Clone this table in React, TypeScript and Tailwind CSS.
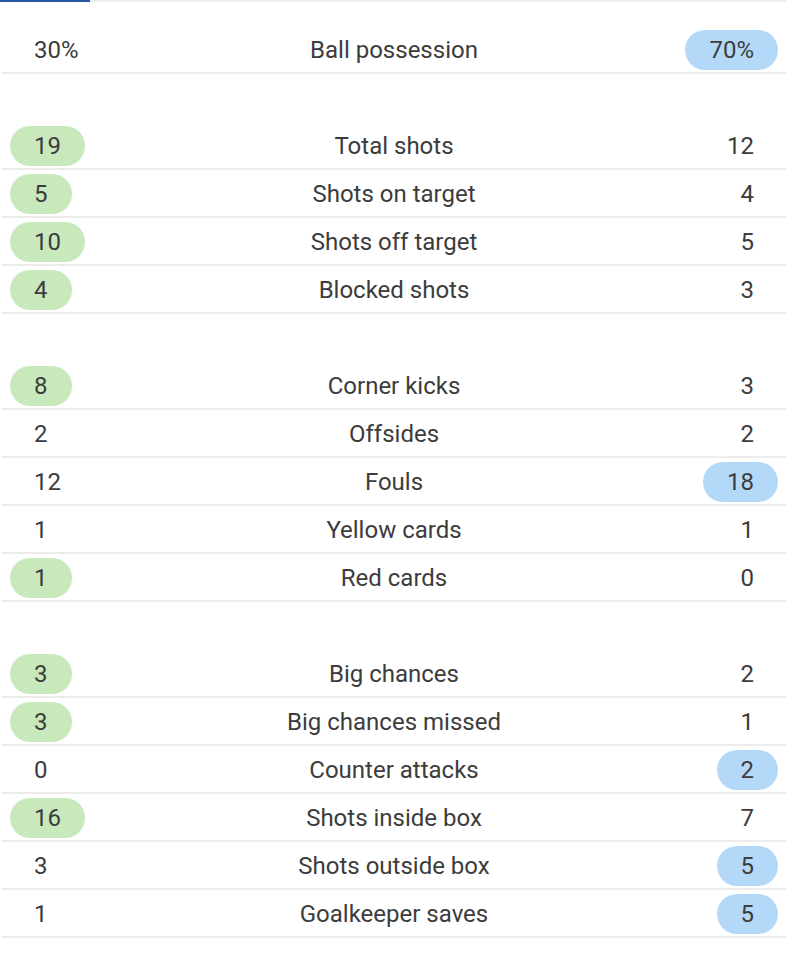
import React from "react";

type Row = { l: string; label: string; r: string; hl?: "l" | "r" };

const sections: Row[][] = [
  [{ l: "30%", label: "Ball possession", r: "70%", hl: "r" }],
  [
    { l: "19", label: "Total shots", r: "12", hl: "l" },
    { l: "5", label: "Shots on target", r: "4", hl: "l" },
    { l: "10", label: "Shots off target", r: "5", hl: "l" },
    { l: "4", label: "Blocked shots", r: "3", hl: "l" },
  ],
  [
    { l: "8", label: "Corner kicks", r: "3", hl: "l" },
    { l: "2", label: "Offsides", r: "2" },
    { l: "12", label: "Fouls", r: "18", hl: "r" },
    { l: "1", label: "Yellow cards", r: "1" },
    { l: "1", label: "Red cards", r: "0", hl: "l" },
  ],
  [
    { l: "3", label: "Big chances", r: "2", hl: "l" },
    { l: "3", label: "Big chances missed", r: "1", hl: "l" },
    { l: "0", label: "Counter attacks", r: "2", hl: "r" },
    { l: "16", label: "Shots inside box", r: "7", hl: "l" },
    { l: "3", label: "Shots outside box", r: "5", hl: "r" },
    { l: "1", label: "Goalkeeper saves", r: "5", hl: "r" },
  ],
];

function Val({ v, hl }: { v: string; hl?: "green" | "blue" }) {
  const bg = hl === "green" ? "bg-[#c9e8bc]" : hl === "blue" ? "bg-[#b4d9f8]" : "";
  return (
    <div className={`h-10 px-6 rounded-full flex items-center justify-center ${bg}`}>
      {v}
    </div>
  );
}

export default function App() {
  return (
    <div
      className="w-[790px] h-[958px] bg-white text-[#3c3c3c] text-[24px] leading-none"
      style={{ fontFamily: "Roboto, 'Noto Sans', sans-serif" }}
    >
      <div className="flex w-[786px] h-[2px]">
        <div className="w-[90px] bg-[#2358a3]" />
        <div className="flex-1 bg-[#ededf0]" />
      </div>
      <div className="mx-[2px] w-[784px] pt-6 flex flex-col gap-12">
        {sections.map((sec, i) => (
          <div key={i} className="flex flex-col">
            {sec.map((row, j) => (
              <div
                key={j}
                className="grid grid-cols-[1fr_auto_1fr] items-center pt-1 pb-[2px] px-2 border-b-2 border-[#ececec]"
              >
                <div className="flex justify-start">
                  <Val v={row.l} hl={row.hl === "l" ? "green" : undefined} />
                </div>
                <div className="text-center">{row.label}</div>
                <div className="flex justify-end">
                  <Val v={row.r} hl={row.hl === "r" ? "blue" : undefined} />
                </div>
              </div>
            ))}
          </div>
        ))}
      </div>
    </div>
  );
}
